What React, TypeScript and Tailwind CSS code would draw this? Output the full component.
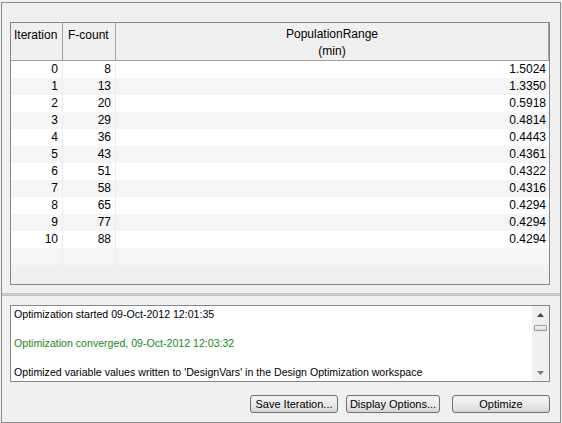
import React from 'react'

const rows: [number, number, string][] = [
  [0, 8, '1.5024'],
  [1, 13, '1.3350'],
  [2, 20, '0.5918'],
  [3, 29, '0.4814'],
  [4, 36, '0.4443'],
  [5, 43, '0.4361'],
  [6, 51, '0.4322'],
  [7, 58, '0.4316'],
  [8, 65, '0.4294'],
  [9, 77, '0.4294'],
  [10, 88, '0.4294'],
]

function Button({ label, width }: { label: string; width: string }) {
  return (
    <button
      className={`${width} h-[18px] whitespace-nowrap rounded-[3px] border border-[#707070] bg-gradient-to-b from-[#f3f3f3] via-[#ebebeb] to-[#d6d6d6] text-[11px] leading-[16px] text-black`}
    >
      {label}
    </button>
  )
}

function Scrollbar() {
  return (
    <div className="flex w-[17px] flex-col items-center bg-[#f0f0f0]">
      <div className="flex h-[17px] w-full items-center justify-center">
        <svg width="7" height="4" viewBox="0 0 7 4">
          <path d="M0 4 L3.5 0 L7 4 Z" fill="#444" />
        </svg>
      </div>
      <div className="mt-[2px] h-[6px] w-[13px] rounded-[1px] border border-[#9a9a9a] bg-gradient-to-b from-[#f4f4f4] to-[#dcdcdc]" />
      <div className="flex-1" />
      <div className="flex h-[17px] w-full items-center justify-center">
        <svg width="7" height="4" viewBox="0 0 7 4">
          <path d="M0 0 L7 0 L3.5 4 Z" fill="#777" />
        </svg>
      </div>
    </div>
  )
}

export default function App() {
  return (
    <div
      className="h-[423px] w-[562px] bg-[#f0f0f0] pl-[1px] pt-[2px]"
      style={{ fontFamily: '"Liberation Sans", Arial, sans-serif' }}
    >
      <div className="flex h-[421px] w-[560px] flex-col border border-[#8c8c8c]">
        {/* results table */}
        <div className="ml-[8px] mt-[19px] flex h-[263px] w-[540px] flex-col border border-[#828790] bg-[#f0f0f0]">
          <div className="flex h-[38px] border-b border-[#a0a0a0] text-[12px] text-black">
            <div className="w-[52px] border-r border-[#a0a0a0] pl-[3px] pt-[3px]">Iteration</div>
            <div className="w-[53px] border-r border-[#a0a0a0] pl-[5px] pt-[3px]">F-count</div>
            <div className="flex-1 border-r border-[#a0a0a0] pt-[3px] text-center leading-[17px]">
              PopulationRange
              <br />
              (min)
            </div>
          </div>
          {[...rows, null].map((r, i) => (
            <div
              key={i}
              className={`flex h-[17px] text-[12px] leading-[17px] text-black ${
                i % 2 === 0 ? 'bg-white' : 'bg-[#f5f5f5]'
              }`}
            >
              <div className="w-[52px] border-r border-[#ececec] pr-[4px] text-right">{r ? r[0] : ''}</div>
              <div className="w-[53px] border-r border-[#ececec] pr-[4px] text-right">{r ? r[1] : ''}</div>
              <div className="flex-1 pr-[3px] text-right">{r ? r[2] : ''}</div>
            </div>
          ))}
        </div>

        {/* splitter */}
        <div className="mt-[8px] h-[3px] border-y border-[#c2c2c2] bg-[#d0d0d0]" />

        {/* log */}
        <div className="ml-[8px] mt-[9px] flex h-[77px] w-[540px] border border-[#828790] bg-white">
          <div className="flex-1 overflow-hidden pl-[3px] pt-[1px] text-[10.6px] leading-[14.5px] text-black">
            <div className="whitespace-nowrap">Optimization started 09-Oct-2012 12:01:35</div>
            <div>&nbsp;</div>
            <div className="whitespace-nowrap text-[#178a17]">Optimization converged, 09-Oct-2012 12:03:32</div>
            <div>&nbsp;</div>
            <div className="whitespace-nowrap">
              Optimized variable values written to 'DesignVars' in the Design Optimization workspace
            </div>
            <div className="-mt-[2px] whitespace-nowrap">lsl PopulationRange updated with optimized values</div>
          </div>
          <Scrollbar />
        </div>

        {/* buttons */}
        <div className="mt-[13px] flex pl-[248px]">
          <Button label="Save Iteration..." width="w-[88px]" />
          <div className="w-[8px]" />
          <Button label="Display Options..." width="w-[94px]" />
          <div className="w-[12px]" />
          <Button label="Optimize" width="w-[98px]" />
        </div>
      </div>
    </div>
  )
}
